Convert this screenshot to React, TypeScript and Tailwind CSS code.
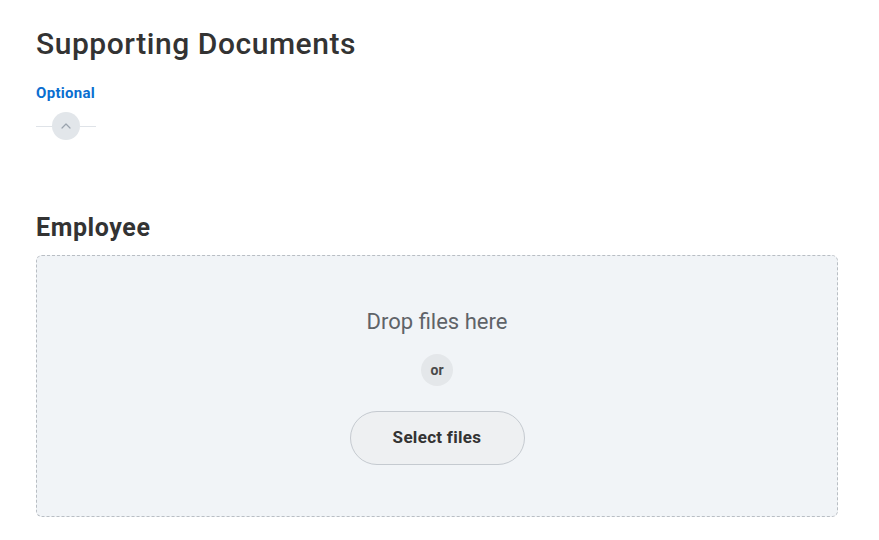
import React from "react";

export default function App() {
  return (
    <div className="w-[879px] h-[540px] bg-white overflow-hidden" style={{ fontFamily: "Roboto, 'Liberation Sans', sans-serif" }}>
      <div className="pl-[36px] pr-[41px] pt-[25px]">
        <h1 className="text-[30px] leading-[38px] text-[#333333] font-medium tracking-[0.55px]">Supporting Documents</h1>
        <div className="mt-[21px] text-[15px] leading-[18px] font-bold text-[#0b6ed0] tracking-[0.3px]">Optional</div>
        <div className="mt-[10px] flex items-center w-[60px]">
          <div className="h-px flex-1 bg-[#dfe3e8]" />
          <div className="w-[28px] h-[28px] rounded-full bg-[#e2e6ea] flex items-center justify-center">
            <svg width="12" height="8" viewBox="0 0 12 8" fill="none">
              <path d="M2 6 L6 2 L10 6" stroke="#9aa3ad" strokeWidth="1.2" strokeLinecap="round" strokeLinejoin="round" />
            </svg>
          </div>
          <div className="h-px flex-1 bg-[#dfe3e8]" />
        </div>
        <h2 className="mt-[73px] text-[25px] leading-[30px] font-bold text-[#333333] tracking-[0.6px]">Employee</h2>
        <div className="mt-[12px] h-[262px] rounded-[6px] border border-dashed border-[#b9bec4] bg-[#f1f4f7] flex flex-col items-center">
          <div className="mt-[53px] text-[22px] leading-[26px] text-[#5f6368]">Drop files here</div>
          <div className="mt-[19px] w-[32px] h-[32px] rounded-full bg-[#e4e7ea] flex items-center justify-center text-[14px] font-bold text-[#494949]">or</div>
          <button className="mt-[25px] w-[175px] h-[54px] rounded-full border border-[#c5cad0] bg-[#eef0f2] text-[17px] font-bold text-[#333333] tracking-[0.3px]">Select files</button>
        </div>
      </div>
    </div>
  );
}
